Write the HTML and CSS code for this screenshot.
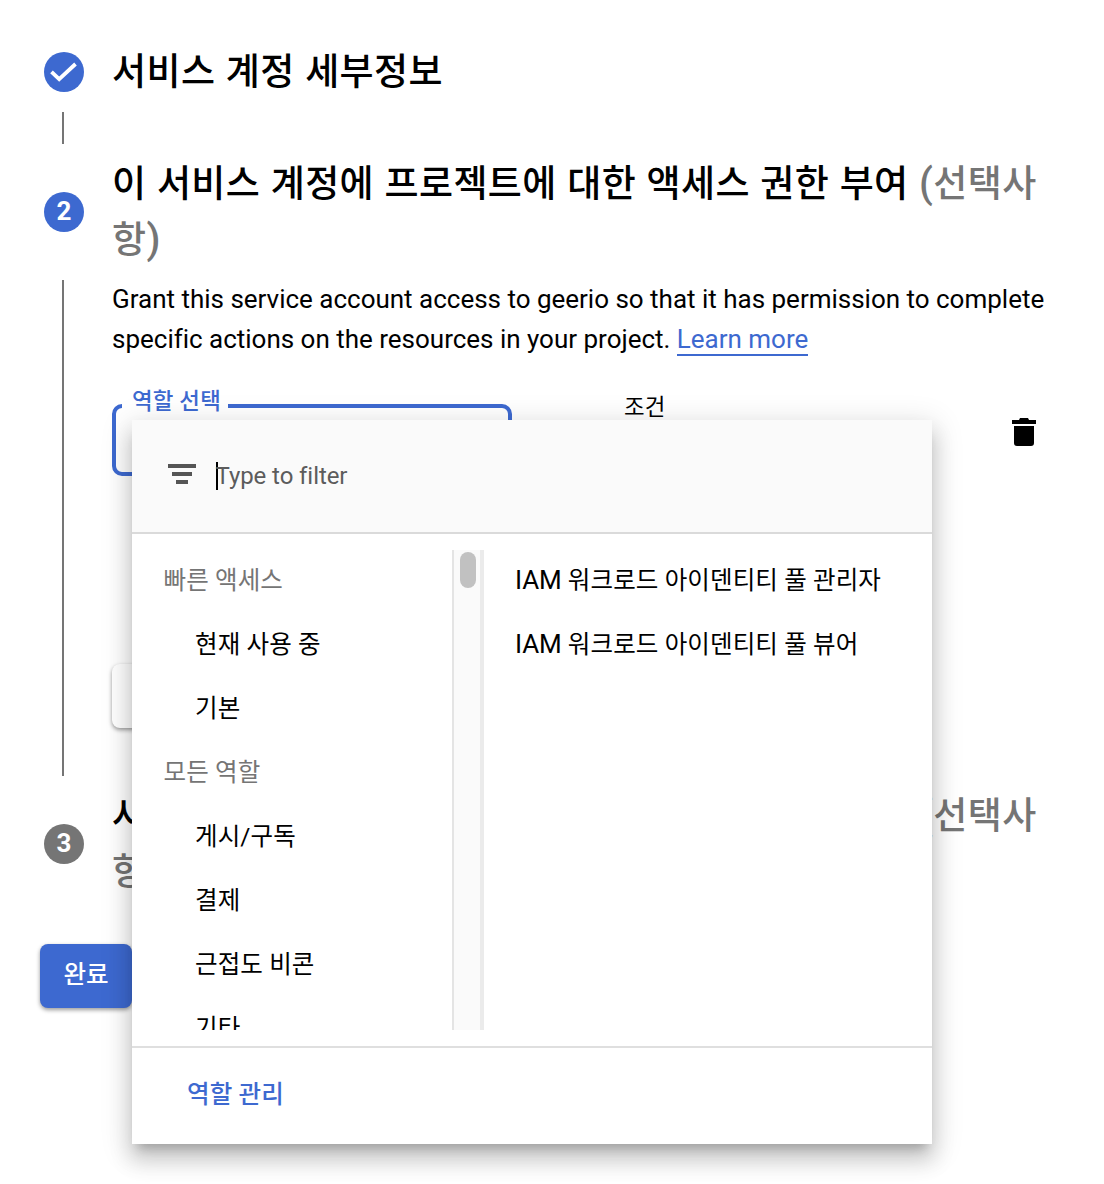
FILE: index.html
```html
<!DOCTYPE html>
<html lang="ko">
<head>
<meta charset="utf-8">
<title>서비스 계정</title>
<link rel="stylesheet" href="styles.css">
</head>
<body>
<main class="stepper">
  <section class="step step-done">
    <div class="rail">
      <span class="badge"><svg viewBox="0 0 40 40" width="40" height="40"><path d="M7.5 19.8l7.7 7.4L31.5 12" fill="none" stroke="#fff" stroke-width="3.8"/></svg></span>
      <span class="line"></span>
    </div>
    <h2 class="title">서비스 계정 세부정보</h2>
  </section>
  <section class="step step-active">
    <div class="rail">
      <span class="badge">2</span>
      <span class="line"></span>
    </div>
    <div class="content">
      <h2 class="title">이 서비스 계정에 프로젝트에 대한 액세스 권한 부여 <span class="optional"><span class="paren">(</span>선택사<br>항<span class="paren">)</span></span></h2>
      <p class="description">Grant this service account access to geerio so that it has permission to complete<br>specific actions on the resources in your project. <a class="link">Learn more</a></p>
      <div class="role-row">
        <div class="role-field"><span class="role-label">역할 선택</span></div>
        <span class="condition">조건</span>
        <svg class="trash" viewBox="0 0 24 28" width="24" height="28"><path d="M0 2h7l1-2h8l1 2h7v4H0zM2 8h20v17q0 3-3 3H5q-3 0-3-3z"/></svg>
      </div>
      <button class="add-role"></button>
    </div>
  </section>
  <section class="step step-next">
    <div class="rail"><span class="badge">3</span></div>
    <h2 class="title">사용자에게 이 서비스 계정에 대한 액세스 권한 부여 <span class="optional"><span class="paren">(</span>선택사<br>항<span class="paren">)</span></span></h2>
  </section>
  <button class="done">완료</button>
</main>
<div class="menu">
  <div class="filter">
    <svg class="filter-icon" viewBox="0 0 28 20" width="28" height="20"><path d="M0 0h28v4H0zM4 8h20v4H4zM8 16h12v4H8z" fill="#555"/></svg>
    <span class="caret"></span><span class="placeholder">Type to filter</span>
  </div>
  <div class="panes">
    <div class="categories">
      <div class="item group">빠른 액세스</div>
      <div class="item">현재 사용 중</div>
      <div class="item">기본</div>
      <div class="item group">모든 역할</div>
      <div class="item">게시/구독</div>
      <div class="item">결제</div>
      <div class="item">근접도 비콘</div>
      <div class="item">기타</div>
    </div>
    <div class="scrollbar"><span class="thumb"></span></div>
    <div class="roles">
      <div class="item"><span class="latin">IAM </span>워크로드 아이덴티티 풀 관리자</div>
      <div class="item"><span class="latin">IAM </span>워크로드 아이덴티티 풀 뷰어</div>
    </div>
  </div>
  <div class="footer">역할 관리</div>
</div>
</body>
</html>
```
FILE: styles.css
```css
* { box-sizing: border-box; }
body { margin: 0; width: 1104px; height: 1184px; overflow: hidden; position: relative; background: #fff; color: #000; font-family: Roboto, "Noto Sans CJK KR", sans-serif; }
.stepper { display: flex; flex-direction: column; padding: 44px 40px 0; }
.step { display: flex; gap: 28px; padding-left: 4px; }
.rail { width: 40px; flex: none; display: flex; flex-direction: column; align-items: center; }
.badge { width: 40px; height: 40px; flex: none; border-radius: 50%; background: #3d69d0; color: #fff; font-size: 26px; font-weight: 700; line-height: 39px; text-align: center; }
.line { width: 2px; background: #757575; margin-right: 2px; }
.title { margin: 0; padding-top: 1px; font-size: 37px; font-weight: 500; line-height: 56px; letter-spacing: .42px; word-spacing: .8px; white-space: nowrap; }
.optional { color: #757575; }
.paren { font-size: 40px; line-height: 1; }
.step-done { height: 112px; }
.step-done .rail { padding-top: 8px; }
.step-done .line { height: 32px; margin-top: 20px; }
.step-active { height: 632px; }
.step-active .rail { padding-top: 36px; }
.step-active .line { height: 496px; margin-top: 48px; }
.step-next { height: 156px; }
.step-next .rail { padding-top: 36px; }
.step-next .badge { background: #757575; }
.description { margin: 10px 0 0; font-size: 26px; line-height: 40px; letter-spacing: -.01px; white-space: nowrap; }
.link { color: #3d69d0; border-bottom: 2px solid #3d69d0; }
.role-row { display: flex; align-items: flex-start; height: 304px; padding-top: 45px; }
.role-field { width: 400px; height: 72px; border: 4px solid #3d69d0; border-radius: 10px; padding-left: 6px; }
.role-label { display: block; width: 106px; margin-top: -24px; padding: 0 0 0 10px; background: #fff; color: #3d69d0; font-size: 22.4px; font-weight: 500; line-height: 35px; letter-spacing: .2px; white-space: nowrap; }
.condition { width: 80px; margin: -13px 308px 0 112px; font-size: 22.4px; line-height: 32px; letter-spacing: .1px; }
.trash { margin-top: 14px; }
.add-role { display: block; width: 200px; height: 64px; border: 0; border-radius: 8px; background: #fff; margin-top: 1px; box-shadow: 0 2px 4px rgba(0,0,0,.4); }
.done { width: 92px; height: 64px; padding: 0 0 2px; border: 0; border-radius: 8px; background: #3d69d0; color: #fff; font: 500 24.5px/60px Roboto, "Noto Sans CJK KR", sans-serif; box-shadow: 0 2px 4px rgba(0,0,0,.4); }
.menu { position: absolute; left: 132px; top: 420px; width: 800px; height: 724px; background: #fff; box-shadow: 0 10px 10px -6px rgba(0,0,0,.2), 0 16px 20px 2px rgba(0,0,0,.14), 0 6px 28px 4px rgba(0,0,0,.12); }
.filter { height: 114px; display: flex; align-items: center; padding: 0 36px; background: #fafafa; border-bottom: 2px solid #dadada; color: #5c5c5c; font-size: 24px; }
.filter-icon { margin-bottom: 4px; }
.caret { width: 2px; height: 28px; margin-left: 20px; background: #000; }
.placeholder { margin-left: -2.5px; letter-spacing: -.08px; }
.panes { display: flex; height: 512px; padding: 16px 0; }
.categories { width: 320px; height: 480px; overflow: hidden; }
.item { height: 64px; padding-left: 63px; font-size: 24.5px; line-height: 61px; letter-spacing: .12px; white-space: nowrap; }
.group { padding-left: 31.5px; color: #757575; }
.scrollbar { width: 32px; height: 480px; padding: 2px 6px; background: #fafafa; border: solid #e4e4e4; border-width: 0 4px 0 2px; border-right-color: #ebebeb; }
.thumb { display: block; width: 16px; height: 36px; border-radius: 8px; background: #c1c1c1; }
.roles .item { padding-left: 31px; }
.latin { font-size: 26px; line-height: 1; letter-spacing: -.15px; }
.footer { height: 98px; padding-left: 55px; border-top: 2px solid #dfdfdf; color: #3d69d0; font-size: 24.5px; font-weight: 500; line-height: 93px; letter-spacing: .12px; }
```
